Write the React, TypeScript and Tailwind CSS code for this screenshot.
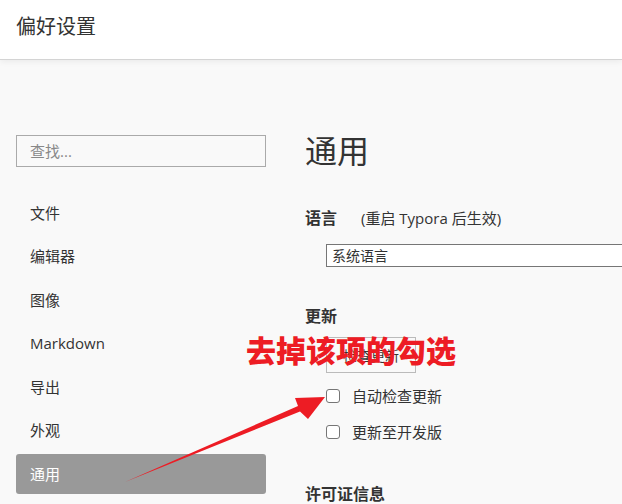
const font = "font-['Open_Sans','Noto_Sans_CJK_SC',sans-serif]";

const navItems = ["文件", "编辑器", "图像", "Markdown", "导出", "外观", "通用"];

const App = () => {
  return (
    <div className={`relative w-[622px] h-[504px] overflow-hidden bg-[#f9f9f9] text-[#333] ${font}`}>
      <header className="h-[60px] bg-white border-b border-[#d4d4d4] shadow-[0_2px_6px_rgba(0,0,0,0.06)] flex items-center px-4">
        <h1 className="text-[20px] leading-none text-[#333] -mt-[6px]">偏好设置</h1>
      </header>

      <div className="flex">
        <aside className="w-[250px] ml-4 pt-[75px] shrink-0">
          <div className="h-[32px] border border-[#aaa] flex items-center px-[13px]">
            <span className="text-[15px] text-[#888]">查找...</span>
          </div>
          <nav className="mt-[26px] flex flex-col gap-[3.5px]">
            {navItems.map((item) => (
              <div
                key={item}
                className={
                  item === "通用"
                    ? "h-10 flex items-center px-[14px] text-[15px] rounded-[3px] bg-[#999] text-white"
                    : "h-10 flex items-center px-[14px] text-[15px] text-[#333]"
                }
              >
                {item}
              </div>
            ))}
          </nav>
        </aside>

        <main className="ml-[39px] pt-[75px] flex-1">
          <h2 className="text-[32px] leading-[32px] text-[#333]">通用</h2>

          <div className="mt-[39px] h-6 flex items-center">
            <span className="text-[16px] font-bold">语言</span>
            <span className="ml-[24px] text-[15px]">(重启 Typora 后生效)</span>
          </div>
          <div className="mt-[14px] ml-[21px] w-[320px] h-[23px] bg-white border border-[#767676] flex items-center px-[5px] text-[14px]">
            系统语言
          </div>

          <div className="mt-[37px] h-6 flex items-center text-[16px] font-bold">更新</div>
          <div className="mt-[9px] ml-[21px] w-[90px] h-[36px] border border-[#bbb] flex items-center justify-center text-[14px]">
            检查更新
          </div>

          <label className="mt-[11px] ml-[21px] h-6 flex items-center gap-[12px] text-[15px]">
            <span className="w-[14px] h-[14px] rounded-[3px] border border-[#767676] bg-white" />
            自动检查更新
          </label>
          <label className="mt-[12px] ml-[21px] h-6 flex items-center gap-[12px] text-[15px]">
            <span className="w-[14px] h-[14px] rounded-[3px] border border-[#767676] bg-white" />
            更新至开发版
          </label>

          <div className="mt-[38px] h-6 flex items-center text-[16px] font-bold">许可证信息</div>
        </main>
      </div>

      {/* annotation overlay */}
      <div className="absolute left-[246px] top-[334px] text-[30px] leading-none font-black text-[#ed1c24] font-['Noto_Sans_CJK_SC',sans-serif]">
        去掉该项的勾选
      </div>
      <svg className="absolute left-0 top-0" width="622" height="504" viewBox="0 0 622 504">
        <polygon
          points="125,482 298,406 295,398 325,397 308,419 300,411.5"
          fill="#ed1c24"
        />
      </svg>
    </div>
  );
};

export default App;
